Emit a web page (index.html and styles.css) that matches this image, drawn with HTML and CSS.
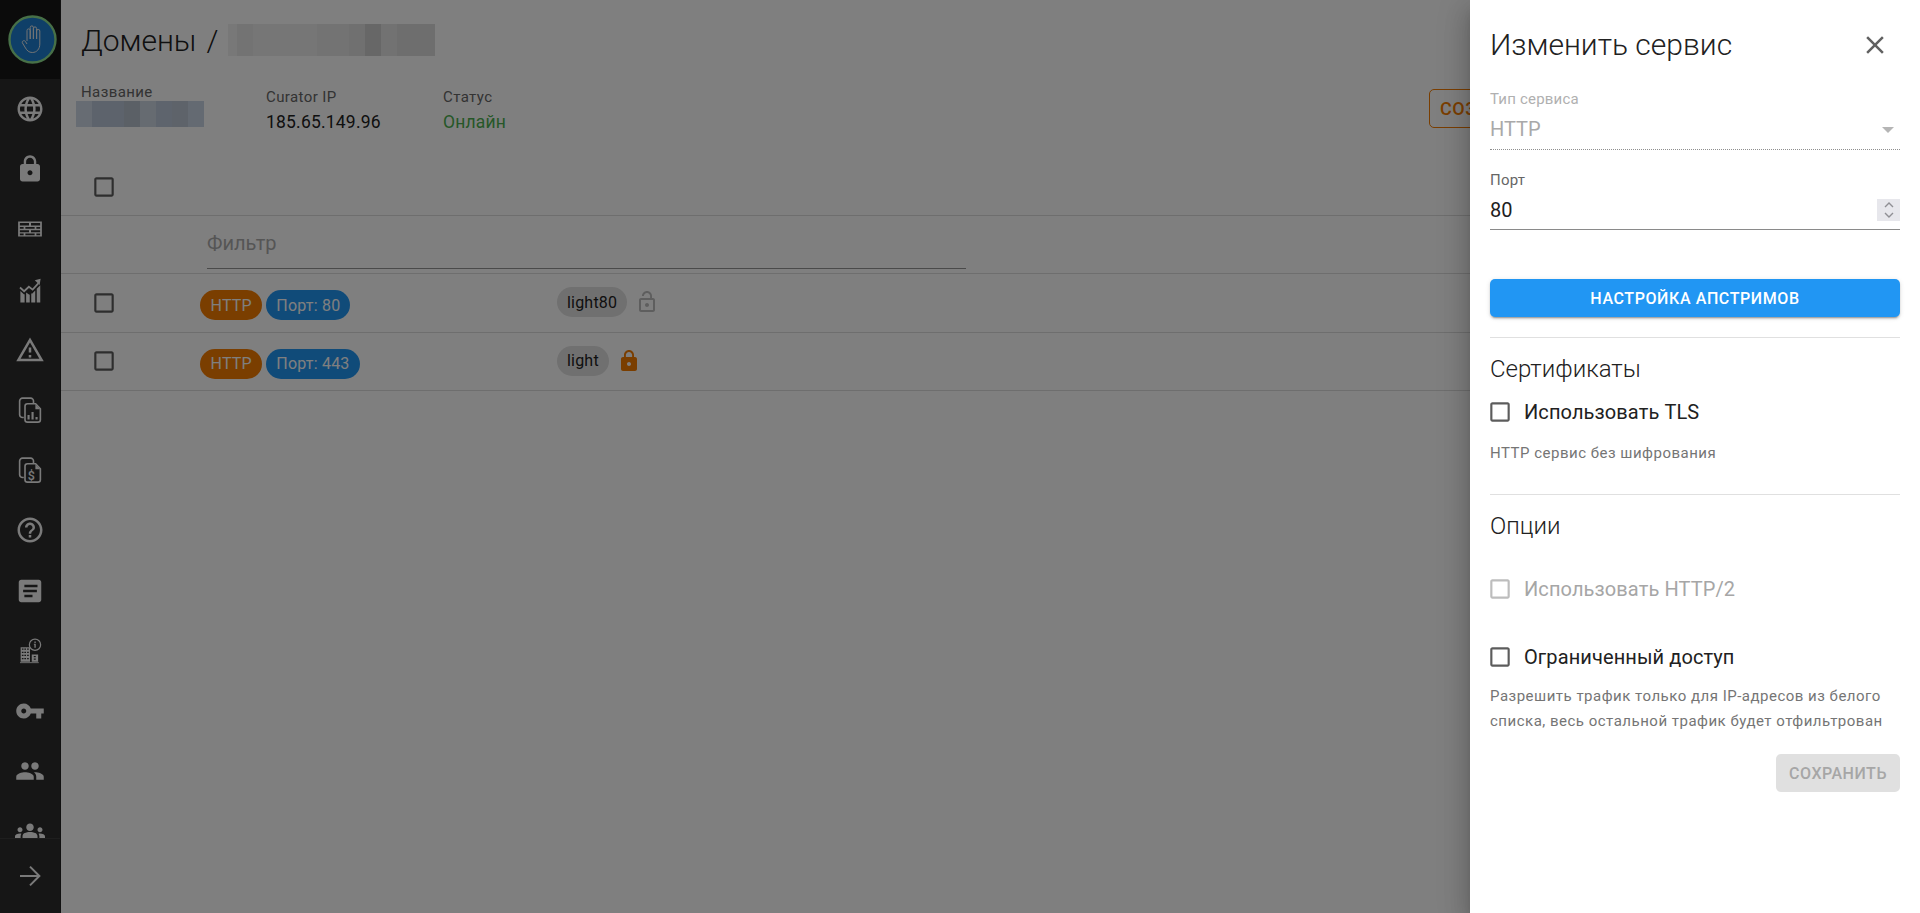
FILE: index.html
```html
<!DOCTYPE html>
<html lang="ru">
<head>
  <meta charset="UTF-8">
  <meta name="viewport" content="width=device-width, initial-scale=1.0">
  <title>Домены</title>
  <link rel="stylesheet" href="styles.css">
</head>
<body>
  <svg class="sprite" width="0" height="0">
    <symbol id="i-box" viewBox="0 0 24 24"><path d="M19 5v14H5V5h14m0-2H5c-1.1 0-2 .9-2 2v14c0 1.1.9 2 2 2h14c1.1 0 2-.9 2-2V5c0-1.1-.9-2-2-2z"/></symbol>
    <symbol id="i-lock" viewBox="0 0 24 24"><path d="M18 8h-1V6c0-2.76-2.24-5-5-5S7 3.24 7 6v2H6c-1.1 0-2 .9-2 2v10c0 1.1.9 2 2 2h12c1.1 0 2-.9 2-2V10c0-1.1-.9-2-2-2zm-6 9c-1.1 0-2-.9-2-2s.9-2 2-2 2 .9 2 2-.9 2-2 2zm3.1-9H8.9V6c0-1.71 1.39-3.1 3.1-3.1 1.71 0 3.1 1.39 3.1 3.1v2z"/></symbol>
    <symbol id="i-lock-open" viewBox="0 0 24 24"><path d="M12 17c1.1 0 2-.9 2-2s-.9-2-2-2-2 .9-2 2 .9 2 2 2zm6-9h-1V6c0-2.76-2.24-5-5-5S7 3.24 7 6h1.9c0-1.71 1.39-3.1 3.1-3.1 1.71 0 3.1 1.39 3.1 3.1v2H6c-1.1 0-2 .9-2 2v10c0 1.1.9 2 2 2h12c1.1 0 2-.9 2-2V10c0-1.1-.9-2-2-2zm0 12H6V10h12v10z"/></symbol>
  </svg>

  <div class="app">
    <aside class="sidebar">
      <div class="logo">
        <svg viewBox="0 0 49 49" width="49" height="49">
          <circle cx="24.5" cy="24.5" r="23" fill="#1e7fd0" stroke="#8fe08f" stroke-width="2.4"/>
          <path d="M19 26V15.500a1.600 1.600 0 0 1 3.200 0V24M22.200 24V12.500a1.600 1.600 0 0 1 3.200 0V24M25.400 24V13.500a1.600 1.600 0 0 1 3.200 0V24M28.600 24V16a1.600 1.600 0 0 1 3.200 0v13c0 5-3 8.500-7.500 8.500-3.500 0-5.300-2-6.800-4.500l-3-5c-1-1.800 1.500-3.200 2.800-1.700L19 29" fill="none" stroke="#e8e8e8" stroke-width="1"/>
        </svg>
      </div>
      <nav class="nav">
        <a class="nav-item"><svg viewBox="0 0 24 24"><path d="M11.990 2C6.470 2 2 6.480 2 12s4.470 10 9.990 10C17.520 22 22 17.520 22 12S17.520 2 11.990 2zm6.930 6h-2.950c-.32-1.250-.78-2.450-1.380-3.560 1.840.63 3.370 1.910 4.330 3.560zM12 4.040c.83 1.200 1.480 2.530 1.910 3.960h-3.820c.43-1.430 1.080-2.760 1.910-3.960zM4.260 14C4.100 13.360 4 12.690 4 12s.1-1.360.26-2h3.380c-.08.66-.14 1.320-.14 2 0 .68.06 1.340.14 2H4.260zm.82 2h2.950c.32 1.250.78 2.450 1.380 3.560-1.840-.63-3.370-1.900-4.330-3.560zm2.950-8H5.080c.96-1.660 2.490-2.930 4.330-3.560C8.810 5.550 8.350 6.750 8.030 8zM12 19.960c-.83-1.200-1.480-2.530-1.910-3.960h3.820c-.43 1.430-1.080 2.760-1.910 3.960zM14.340 14H9.660c-.09-.66-.16-1.320-.16-2 0-.68.07-1.350.16-2h4.680c.09.65.16 1.320.16 2 0 .68-.07 1.340-.16 2zm.25 5.560c.6-1.110 1.060-2.310 1.380-3.560h2.950c-.96 1.650-2.490 2.930-4.330 3.560zM16.360 14c.08-.66.14-1.320.14-2 0-.68-.06-1.340-.14-2h3.380c.16.64.26 1.310.26 2s-.1 1.360-.26 2h-3.380z"/></svg></a>
        <a class="nav-item"><svg viewBox="0 0 24 24"><use href="#i-lock"/></svg></a>
        <a class="nav-item"><svg viewBox="0 0 24 24"><path fill-rule="evenodd" d="M2.500 6h19v12h-19zM3.900 7.200v1.900h7.300V7.200zM12.800 7.200v1.900h7.300V7.200zM3.900 10.400v1.300h3v-1.300zM8.300 10.400v1.300h7.400v-1.300zM17.100 10.400v1.300h3v-1.300zM3.900 13v1.500h7.300V13zM12.800 13v1.500h7.300V13zM3.900 15.600v1.300h3v-1.300zM8.300 15.600v1.300h7.400v-1.300zM17.100 15.600v1.300h3v-1.300z"/></svg></a>
        <a class="nav-item"><svg viewBox="0 0 24 24"><path d="M4.300 12.700l3 2.800.4-.4V22H4.300zM8.900 13.900l2.600 1.900.3-.2V22H8.900zM13 14.600l.6.4 2.600-2.700V22H13zM17.400 11l2.800-2.900V22h-2.800z"/><path d="M4 10l3.300 3 3.800-3.600 3 2.300 4.700-5.200" fill="none" stroke="currentColor" stroke-width="1.400"/><path d="M15.800 4.200l4.700-1.200-.8 4.900z"/></svg></a>
        <a class="nav-item"><svg viewBox="0 0 24 24"><path d="M12 5.990L19.530 19H4.470L12 5.990M12 2L1 21h22L12 2zm1 14h-2v2h2v-2zm0-6h-2v4h2v-4z"/></svg></a>
        <a class="nav-item"><svg viewBox="0 0 24 24"><g fill="none" stroke="currentColor" stroke-width="1.300"><path d="M7 18H6a2.300 2.300 0 0 1-2.300-2.300V4.800A2.300 2.300 0 0 1 6 2.500h6.500a2.300 2.300 0 0 1 2.300 2.300V7"/><path d="M10 7h6.500l3.800 4v8.700a2 2 0 0 1-2 2H10a2 2 0 0 1-2-2V9a2 2 0 0 1 2-2z"/></g><path d="M16.300 7.500v3.800h3.700zM10 16h1.700v3.500H10zM13.200 13.500h1.700v6h-1.700zM16.400 17.500h1.700v2h-1.700z"/></svg></a>
        <a class="nav-item"><svg viewBox="0 0 24 24"><g fill="none" stroke="currentColor" stroke-width="1.300"><path d="M7 18H6a2.300 2.300 0 0 1-2.300-2.300V4.800A2.300 2.300 0 0 1 6 2.500h6.500a2.300 2.300 0 0 1 2.300 2.300V7"/><path d="M10 7h6.500l3.800 4v8.700a2 2 0 0 1-2 2H10a2 2 0 0 1-2-2V9a2 2 0 0 1 2-2z"/></g><path d="M16.300 7.500v3.800h3.700z"/><text class="dollar" x="13" y="20">$</text></svg></a>
        <a class="nav-item"><svg viewBox="0 0 24 24"><path d="M11 18h2v-2h-2v2zm1-16C6.480 2 2 6.480 2 12s4.480 10 10 10 10-4.480 10-10S17.520 2 12 2zm0 18c-4.410 0-8-3.590-8-8s3.590-8 8-8 8 3.590 8 8-3.590 8-8 8zm0-14c-2.210 0-4 1.790-4 4h2c0-1.100.9-2 2-2s2 .9 2 2c0 2-3 1.750-3 5h2c0-2.250 3-2.500 3-5 0-2.210-1.790-4-4-4z"/></svg></a>
        <a class="nav-item"><svg viewBox="0 0 24 24"><path d="M19 3H5c-1.100 0-2 .9-2 2v14c0 1.100.9 2 2 2h14c1.100 0 2-.9 2-2V5c0-1.100-.9-2-2-2zm-5 14H7.500v-2H14zm3.500-4H6.500v-2h11zm.5-4H7.500V7H18z"/></svg></a>
        <a class="nav-item"><svg viewBox="0 0 24 24"><path fill-rule="evenodd" d="M4.500 9h7.500v11.500H4.500zM5.500 10v1h1.300v-1zM7.500 10v1h1.300v-1zM9.700 10v1h1.300v-1zM5.500 12.500v1h1.300v-1zM7.500 12.500v1h1.300v-1zM9.700 12.500v1h1.300v-1zM5.500 15v1h1.300v-1zM7.500 15v1h1.300v-1zM9.700 15v1h1.300v-1zM5.500 17.500v1h1.300v-1zM7.500 17.500v1h1.300v-1zM9.700 17.500v1h1.300v-1zM13.400 14.800h5.100v5.700h-5.100zM15 16v1h1.600v-1zM15 18v1h1.600v-1z"/><path d="M4 21h15v.7H4z"/><circle cx="16" cy="7" r="4.500" fill="none" stroke="currentColor" stroke-width="1"/><path d="M15.500 4.400h1.100v1.100h-1.100zM15.100 6.100h1.500v3.300h-1.100V6.900h-.4z"/></svg></a>
        <a class="nav-item"><svg viewBox="0 0 24 24"><path d="M12.650 10C11.830 7.670 9.610 6 7 6c-3.310 0-6 2.690-6 6s2.690 6 6 6c2.610 0 4.830-1.670 5.650-4H17v4h4v-4h2v-4H12.650zM7 14c-1.100 0-2-.9-2-2s.9-2 2-2 2 .9 2 2-.9 2-2 2z"/></svg></a>
        <a class="nav-item"><svg viewBox="0 0 24 24"><path d="M16 11c1.660 0 2.990-1.340 2.990-3S17.660 5 16 5c-1.660 0-3 1.340-3 3s1.340 3 3 3zm-8 0c1.660 0 2.990-1.340 2.990-3S9.660 5 8 5C6.340 5 5 6.340 5 8s1.340 3 3 3zm0 2c-2.330 0-7 1.170-7 3.500V19h14v-2.500c0-2.330-4.670-3.500-7-3.500zm8 0c-.29 0-.62.02-.97.05 1.160.84 1.970 1.970 1.970 3.450V19h6v-2.500c0-2.330-4.670-3.500-7-3.500z"/></svg></a>
        <a class="nav-item"><svg viewBox="0 0 24 24"><path d="M12 12.750c1.630 0 3.070.39 4.240.9 1.080.48 1.760 1.560 1.760 2.730V18H6v-1.610c0-1.180.68-2.260 1.760-2.730 1.170-.52 2.610-.91 4.240-.91zM4 13c1.100 0 2-.9 2-2s-.9-2-2-2-2 .9-2 2 .9 2 2 2zm1.130 1.100c-.37-.06-.74-.1-1.130-.1-.99 0-1.930.21-2.780.58C.48 14.900 0 15.620 0 16.430V18h4.500v-1.610c0-.83.23-1.610.63-2.290zM20 13c1.100 0 2-.9 2-2s-.9-2-2-2-2 .9-2 2 .9 2 2 2zm4 3.430c0-.81-.48-1.530-1.220-1.850-.85-.37-1.790-.58-2.780-.58-.39 0-.76.04-1.130.1.4.68.63 1.460.63 2.290V18H24v-1.570zM12 6c1.660 0 3 1.340 3 3s-1.340 3-3 3-3-1.340-3-3 1.340-3 3-3z"/></svg></a>
      </nav>
      <div class="sidebar-footer">
        <svg viewBox="0 0 24 24"><path d="M4 12h15.500M12 4.500l7.500 7.500-7.500 7.500" fill="none" stroke="currentColor" stroke-width="1.600"/></svg>
      </div>
    </aside>

    <main class="main">
      <header class="page-title">
        <h1>Домены</h1>
        <span class="slash">/</span>
        <div class="mosaic mosaic-title"></div>
      </header>

      <div class="info-row">
        <div class="info-col info-name">
          <div class="info-label">Название</div>
          <div class="mosaic mosaic-name"></div>
        </div>
        <div class="info-col info-ip">
          <div class="info-label">Curator IP</div>
          <div class="info-value">185.65.149.96</div>
        </div>
        <div class="info-col">
          <div class="info-label">Статус</div>
          <div class="info-value online">Онлайн</div>
        </div>
        <button class="btn-create">СОЗ</button>
      </div>

      <div class="table">
        <div class="tr tr-head">
          <div class="td-check"><svg class="checkbox"><use href="#i-box"/></svg></div>
        </div>
        <div class="tr tr-filter">
          <div class="filter">Фильтр</div>
        </div>
        <div class="tr">
          <div class="td-check"><svg class="checkbox"><use href="#i-box"/></svg></div>
          <div class="td-chips">
            <span class="chip chip-orange">HTTP</span>
            <span class="chip chip-blue">Порт: 80</span>
          </div>
          <div class="td-name">
            <span class="chip chip-grey">light80</span>
            <svg class="lock-icon lock-off"><use href="#i-lock-open"/></svg>
          </div>
        </div>
        <div class="tr">
          <div class="td-check"><svg class="checkbox"><use href="#i-box"/></svg></div>
          <div class="td-chips">
            <span class="chip chip-orange">HTTP</span>
            <span class="chip chip-blue">Порт: 443</span>
          </div>
          <div class="td-name">
            <span class="chip chip-grey">light</span>
            <svg class="lock-icon lock-on"><use href="#i-lock"/></svg>
          </div>
        </div>
      </div>
    </main>
  </div>

  <div class="scrim"></div>

  <section class="drawer">
    <div class="drawer-head">
      <h2>Изменить сервис</h2>
      <svg class="close" viewBox="0 0 24 24"><path d="M19 6.410L17.590 5 12 10.590 6.410 5 5 6.410 10.590 12 5 17.590 6.410 19 12 13.410 17.590 19 19 17.590 13.410 12z"/></svg>
    </div>

    <div class="field field-select">
      <div class="field-label">Тип сервиса</div>
      <div class="field-control">
        <span>HTTP</span>
        <span class="caret"></span>
      </div>
    </div>

    <div class="field field-port">
      <div class="field-label">Порт</div>
      <div class="field-control">
        <span>80</span>
        <span class="spinner">
          <svg viewBox="0 0 12 20"><path d="M2 7l4-4 4 4M2 13l4 4 4-4" fill="none" stroke="#8f8f94" stroke-width="1.400"/></svg>
        </span>
      </div>
    </div>

    <button class="btn-primary">НАСТРОЙКА АПСТРИМОВ</button>

    <div class="section section-cert">
      <h3>Сертификаты</h3>
      <label class="check-row"><svg class="checkbox"><use href="#i-box"/></svg>Использовать TLS</label>
      <p class="hint">HTTP сервис без шифрования</p>
    </div>

    <div class="section section-options">
      <h3>Опции</h3>
      <label class="check-row disabled"><svg class="checkbox"><use href="#i-box"/></svg>Использовать HTTP/2</label>
      <label class="check-row check-access"><svg class="checkbox"><use href="#i-box"/></svg>Ограниченный доступ</label>
      <p class="hint hint-access">Разрешить трафик только для IP-адресов из белого списка, весь остальной трафик будет отфильтрован</p>
    </div>

    <div class="drawer-actions">
      <button class="btn-save">СОХРАНИТЬ</button>
    </div>
  </section>
</body>
</html>
```

FILE: styles.css
```css
* {
  box-sizing: border-box;
}

html, body {
  margin: 0;
  height: 100%;
  overflow: hidden;
}

body {
  font-family: Roboto, "Noto Sans", sans-serif;
  color: #212121;
  background-color: #fff;
}

.sprite {
  display: block;
}

.app {
  display: flex;
  height: 100vh;
}

/* sidebar */
.sidebar {
  width: 61px;
  flex-shrink: 0;
  display: flex;
  flex-direction: column;
  background-color: #2c2c2c;
  color: #f4f4f4;
  border-right: 1px solid #222;
}

.logo {
  height: 79px;
  flex-shrink: 0;
  display: flex;
  align-items: center;
  justify-content: center;
  padding-left: 4px;
  background-color: #161616;
}

.nav {
  flex: 1;
  overflow: hidden;
}

.nav-item {
  height: 60.2px;
  display: flex;
  align-items: center;
  justify-content: center;
}

.nav-item svg {
  width: 30px;
  height: 30px;
  fill: currentColor;
}

.dollar {
  font-family: Roboto, sans-serif;
  font-size: 10px;
  font-weight: 500;
  text-anchor: middle;
  fill: currentColor;
}

.sidebar-footer {
  height: 75px;
  flex-shrink: 0;
  display: flex;
  align-items: center;
  justify-content: center;
  border-top: 1px solid #3c3c3c;
}

.sidebar-footer svg {
  width: 30px;
  height: 30px;
}

/* main */
.main {
  flex: 1;
  min-width: 0;
}

.page-title {
  display: flex;
  align-items: center;
  height: 80px;
  padding-left: 20px;
}

h1 {
  margin: 0;
  font-size: 30px;
  font-weight: 300;
}

.slash {
  margin-left: 10px;
  font-size: 30px;
  font-weight: 300;
}

.mosaic-title {
  width: 207px;
  height: 32px;
  margin-left: 10px;
  background: linear-gradient(to right, #f0f0f0 0 9px, #e6e6e6 9px 25px, #ececec 25px 89px, #e6e6e6 89px 121px, #e0e0e0 121px 137px, #cfcfcf 137px 153px, #e4e4e4 153px 169px, #dcdcdc 169px 207px);
}

.mosaic-name {
  width: 128px;
  height: 26px;
  margin-left: -5px;
  margin-top: 1px;
  background: linear-gradient(to right, #ced8e6 0 16px, #bac6d8 16px 48px, #b6c0cc 48px 64px, #ccd6e2 64px 80px, #bcc8da 80px 96px, #bcc6d4 96px 112px, #c8d4e4 112px 128px);
}

.info-row {
  display: flex;
  height: 80px;
  padding-left: 20px;
  padding-right: 50px;
}

.info-col {
  padding-top: 7px;
}

.info-name {
  width: 185px;
  padding-top: 5px;
}

.info-ip {
  width: 177px;
}

.info-label {
  font-size: 15px;
  letter-spacing: .4px;
  color: #666;
  line-height: 20px;
}

.info-name .info-label {
  line-height: 15px;
}

.info-value {
  font-size: 17.500px;
  line-height: 26px;
  letter-spacing: .2px;
  margin-top: 2px;
}

.online {
  color: #4caf50;
}

.btn-create {
  margin-left: auto;
  width: 441px;
  height: 39px;
  margin-top: 9px;
  text-align: left;
  padding: 0 10px;
  background: none;
  border: 1px solid #f57c00;
  border-radius: 5px;
  color: #f57c00;
  font-family: inherit;
  font-size: 18px;
  font-weight: 500;
  letter-spacing: .5px;
}

.tr {
  display: flex;
  align-items: center;
  height: 58.5px;
  border-bottom: 1px solid #ddd;
}

.tr-head {
  height: 56px;
  padding-bottom: 2px;
}

.tr-filter {
  height: 58px;
  padding-left: 146px;
}

.td-check {
  width: 139px;
  flex-shrink: 0;
  padding-left: 30px;
  display: flex;
  align-items: center;
}

.checkbox {
  width: 26px;
  height: 26px;
  flex-shrink: 0;
  fill: rgba(0, 0, 0, .64);
}

.filter {
  width: 759px;
  height: 48px;
  padding-top: 9px;
  border-bottom: 1px solid #949494;
  font-size: 20px;
  line-height: 26px;
  color: #ababab;
}

.td-chips {
  width: 357px;
  flex-shrink: 0;
  display: flex;
  gap: 4px;
  padding-top: 5px;
}

.td-name {
  display: flex;
  align-items: center;
  gap: 8px;
  padding-bottom: 1px;
}

.chip {
  height: 30px;
  display: inline-flex;
  align-items: center;
  padding: 0 10px;
  border-radius: 15px;
  font-size: 16px;
  letter-spacing: .2px;
}

.chip-orange {
  padding: 0 10.500px;
  background-color: #f57c00;
  color: #fff;
}

.chip-blue {
  background-color: #2196f3;
  color: #fff;
}

.chip-grey {
  background-color: #e0e0e0;
  color: #212121;
}

.lock-icon {
  width: 24px;
  height: 24px;
}

.lock-off {
  fill: #bdbdbd;
}

.lock-on {
  fill: #f57c00;
}

.scrim {
  position: absolute;
  inset: 0;
  background-color: rgba(0, 0, 0, .5);
}

/* drawer */
.drawer {
  position: absolute;
  top: 0;
  right: 0;
  bottom: 0;
  width: 450px;
  padding: 0 20px;
  background-color: #fff;
  box-shadow: 0 8px 10px -5px rgba(0, 0, 0, .2), 0 16px 24px 2px rgba(0, 0, 0, .14), 0 6px 30px 5px rgba(0, 0, 0, .12);
}

.drawer-head {
  display: flex;
  align-items: center;
  justify-content: space-between;
  height: 90px;
  padding-bottom: 1px;
}

h2 {
  margin: 0;
  font-size: 30px;
  font-weight: 300;
}

.close {
  width: 30px;
  height: 30px;
  margin-right: 10px;
  fill: #616161;
}

.field-label {
  font-size: 15px;
  line-height: 18px;
  letter-spacing: .2px;
  color: #666;
}

.field-control {
  display: flex;
  align-items: center;
  justify-content: space-between;
  font-size: 20px;
  line-height: 30px;
  height: 36px;
}

.field-select .field-label {
  color: #b0b0b0;
}

.field-select .field-control {
  color: #a9a9a9;
  border-bottom: 1px dotted #8f8f8f;
  height: 42px;
}

.caret {
  width: 0;
  height: 0;
  margin-right: 6px;
  margin-top: 3px;
  border-left: 6px solid transparent;
  border-right: 6px solid transparent;
  border-top: 6px solid #b5b5b5;
}

.field-port {
  margin-top: 21px;
}

.field-port .field-control {
  height: 41px;
  padding-top: 1px;
  border-bottom: 1px solid #8a8a8a;
}

.spinner {
  width: 23px;
  height: 22px;
  display: flex;
  align-items: center;
  justify-content: center;
  background-color: #e7e7ec;
}

.spinner svg {
  width: 12px;
  height: 20px;
}

.btn-primary {
  display: block;
  width: 100%;
  height: 38px;
  margin-top: 49px;
  border: none;
  border-radius: 5px;
  background-color: #2196f3;
  color: #fff;
  font-family: inherit;
  font-size: 16px;
  font-weight: 500;
  letter-spacing: .6px;
  box-shadow: 0 3px 1px -2px rgba(0, 0, 0, .2), 0 2px 2px 0 rgba(0, 0, 0, .14), 0 1px 5px 0 rgba(0, 0, 0, .12);
}

.section-cert {
  margin-top: 20px;
  border-top: 1px solid #e0e0e0;
  height: 157px;
}

.section-options {
  border-top: 1px solid #e0e0e0;
}

h3 {
  margin: 0;
  padding-top: 15px;
  font-size: 24px;
  line-height: 32px;
  font-weight: 300;
}

.check-row {
  display: flex;
  align-items: center;
  gap: 11px;
  margin-left: -3px;
  margin-top: 13px;
  height: 28px;
  font-size: 20px;
  letter-spacing: .1px;
}

.check-row.disabled {
  margin-top: 33px;
  color: #a6a6a6;
}

.check-row.disabled .checkbox {
  fill: #bdbdbd;
}

.check-access {
  margin-top: 40px;
}

.hint {
  margin: 15px 0 0;
  font-size: 15px;
  line-height: 25px;
  letter-spacing: .5px;
  color: #757575;
}

.hint-access {
  margin-top: 13px;
}

.drawer-actions {
  display: flex;
  justify-content: flex-end;
  margin-top: 20px;
}

.btn-save {
  width: 124px;
  height: 38px;
  border: none;
  border-radius: 5px;
  background-color: #e0e0e0;
  color: #a6a6a6;
  font-family: inherit;
  font-size: 16px;
  font-weight: 500;
  letter-spacing: .5px;
}
```
